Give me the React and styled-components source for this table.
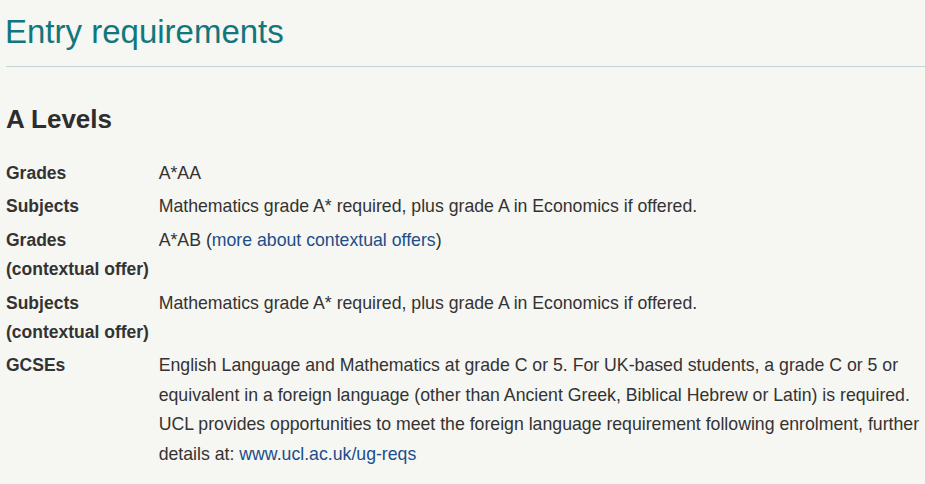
import React from "react";
import styled, { createGlobalStyle } from "styled-components";

const Global = createGlobalStyle`
  html, body {
    margin: 0;
    padding: 0;
    background: #f6f6f2;
  }
  body {
    font-family: "Liberation Sans", Arial, sans-serif;
    color: #333;
  }
`;

const Page = styled.main`
  padding: 0 0 0 6px;
`;

const Header = styled.header`
  margin-top: 14px;
  padding-bottom: 16px;
  border-bottom: 1px solid #c5d4d4;
`;

const Title = styled.h1`
  margin: 0 0 0 -1px;
  font-size: 33px;
  line-height: 36px;
  font-weight: 400;
  color: #11777d;
`;

const Section = styled.section`
  padding-top: 37px;
`;

const SectionTitle = styled.h2`
  margin: 0;
  font-size: 26px;
  line-height: 31px;
  font-weight: 700;
  color: #2d2d2d;
`;

const List = styled.dl`
  margin: 24px 0 0;
  display: grid;
  grid-template-columns: 152.7px 1fr;
  row-gap: 4px;
  font-size: 17.5px;
  line-height: 29.4px;
`;

const Term = styled.dt`
  margin: 0;
  font-weight: 700;
  color: #333;
`;

const Value = styled.dd`
  margin: 0;
  font-size: 17.7px;
  color: #333;
`;

const Link = styled.a`
  color: #1b4e8a;
  text-decoration: none;
`;

const rows = [
  { term: "Grades", value: "A*AA" },
  {
    term: "Subjects",
    value: "Mathematics grade A* required, plus grade A in Economics if offered.",
  },
  {
    term: (
      <>
        Grades
        <br />
        (contextual offer)
      </>
    ),
    value: (
      <>
        A*AB (<Link href="#">more about contextual offers</Link>)
      </>
    ),
  },
  {
    term: (
      <>
        Subjects
        <br />
        (contextual offer)
      </>
    ),
    value: "Mathematics grade A* required, plus grade A in Economics if offered.",
  },
  {
    term: "GCSEs",
    value: (
      <>
        English Language and Mathematics at grade C or 5. For UK-based students, a
        grade C or 5 or equivalent in a foreign language (other than Ancient Greek,
        Biblical Hebrew or Latin) is required. UCL provides opportunities to meet the
        foreign language requirement following enrolment, further details at:{" "}
        <Link href="#">www.ucl.ac.uk/ug-reqs</Link>
      </>
    ),
  },
];

export default function App() {
  return (
    <>
      <Global />
      <Page>
        <Header>
          <Title>Entry requirements</Title>
        </Header>
        <Section>
          <SectionTitle>A Levels</SectionTitle>
          <List>
            {rows.map((r, i) => (
              <React.Fragment key={i}>
                <Term>{r.term}</Term>
                <Value>{r.value}</Value>
              </React.Fragment>
            ))}
          </List>
        </Section>
      </Page>
    </>
  );
}
